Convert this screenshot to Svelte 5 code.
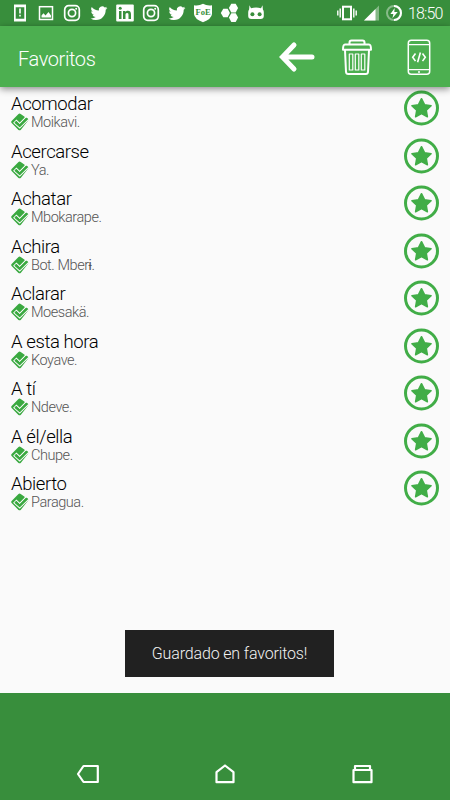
<script lang="ts">
  interface Favorite {
    word: string;
    translation: string;
  }

  const favorites: Favorite[] = [
    { word: 'Acomodar', translation: 'Moikavi.' },
    { word: 'Acercarse', translation: 'Ya.' },
    { word: 'Achatar', translation: 'Mbokarape.' },
    { word: 'Achira', translation: 'Bot. Mberɨ.' },
    { word: 'Aclarar', translation: 'Moesakä.' },
    { word: 'A esta hora', translation: 'Koyave.' },
    { word: 'A tí', translation: 'Ndeve.' },
    { word: 'A él/ella', translation: 'Chupe.' },
    { word: 'Abierto', translation: 'Paragua.' }
  ];

  const notifications = [
    'alert',
    'image',
    'instagram',
    'twitter',
    'linkedin',
    'instagram',
    'twitter',
    'shield',
    'hexagons',
    'robot'
  ];
</script>

<div class="screen">
  <header class="status-bar">
    <div class="notifications">
      {#each notifications as name, i (i)}
        <svg width="20" height="20" viewBox="0 0 20 20" fill="none" stroke="#fff">
          {#if name === 'alert'}
            <path d="M4 1.5h12v17H4zM5.7 4.2v11.6h8.6V4.2z" fill="#fff" fill-rule="evenodd" stroke="none" />
            <path d="M10 5.5v5M10 11.8v1.8" stroke-width="1.6" />
          {:else if name === 'image'}
            <rect x="3.5" y="3.7" width="13" height="12.8" stroke-width="1.5" />
            <path d="M5.5 14.5v-2l2-2.2 2 2.2 3-3.5 2.5 3.5v2z" fill="#fff" stroke="none" />
          {:else if name === 'instagram'}
            <rect x="2.7" y="2.7" width="14.6" height="14.6" rx="4" stroke-width="1.7" />
            <circle cx="10" cy="10" r="3.6" stroke-width="1.7" />
            <circle cx="14.2" cy="5.8" r="1" fill="#fff" stroke="none" />
          {:else if name === 'twitter'}
            <path
              transform="translate(1.6 1.8) scale(.7)"
              d="M23.95 4.57a10 10 0 0 1-2.82.77 4.96 4.96 0 0 0 2.16-2.72c-.95.55-2 .95-3.13 1.18a4.92 4.92 0 0 0-8.38 4.48C7.69 8.09 4.07 6.13 1.64 3.16a4.93 4.93 0 0 0 1.52 6.57 4.9 4.9 0 0 1-2.23-.61v.06a4.92 4.92 0 0 0 3.95 4.83 5 5 0 0 1-2.21.08 4.94 4.94 0 0 0 4.6 3.42A9.87 9.87 0 0 1 0 19.54a14 14 0 0 0 7.55 2.21c9.06 0 14-7.5 14-13.98 0-.21 0-.42-.02-.63a9.9 9.9 0 0 0 2.42-2.57z"
              fill="#fff"
              stroke="none"
            />
          {:else if name === 'linkedin'}
            <rect x="1.2" y="1.5" width="17.6" height="17" rx="1" fill="#fff" stroke="none" />
            <g fill="#388e3c" stroke="none">
              <circle cx="5.2" cy="5.3" r="1.5" />
              <path d="M4 8h2.5v8H4zM8 8h2.4v1.1c.6-.9 1.4-1.3 2.5-1.3 2.4 0 3.1 1.5 3.1 3.7V16h-2.5v-4c0-1.2-.2-2.1-1.4-2.1s-1.6.9-1.6 2V16H8z" />
            </g>
          {:else if name === 'shield'}
            <path d="M1 2.2Q6 3 10 .8q4 2.2 9 1.4V11q-.4 5-9 8.2Q1.4 16 1 11z" fill="#fff" stroke="none" />
            <text x="10" y="12" text-anchor="middle" class="shield-text">FoE</text>
          {:else if name === 'hexagons'}
            <g fill="#fff" stroke="none">
              <path d="M3.3 5.7h4.400l2.200 4.300-2.200 4.300H3.300L.8 10z" />
              <path d="M11.3.8h4.400l2.400 4.300-2.400 4.300h-4.400L8.900 5.100z" />
              <path d="M11.3 10.300h4.400l2.400 4.300-2.400 4.300h-4.400l-2.400-4.300z" />
            </g>
          {:else}
            <path d="M3.5 2.2 5 5.2Q10 3.900 15 5.200l1.5-3 .4 4.300q.9 1 .9 2.800v3.600q0 3-3.200 3H5.400q-3.200 0-3.200-3V9.300q0-1.800.9-2.800z" fill="#fff" stroke="none" />
            <circle cx="6.4" cy="11.2" r="2" fill="#388e3c" stroke="none" />
            <circle cx="13.6" cy="11.2" r="2" fill="#388e3c" stroke="none" />
          {/if}
        </svg>
      {/each}
    </div>
    <div class="system">
      <svg width="20" height="20" viewBox="0 0 20 20" fill="none" stroke="#fff" stroke-width="1.4">
        <rect x="6" y="3.7" width="8" height="12.6" stroke-width="2" />
        <path d="M3.2 5.5v9M.8 7.5v5M16.8 5.5v9M19.2 7.5v5" />
      </svg>
      <svg width="17" height="20" viewBox="0 0 17 20" class="signal">
        <path d="M1 17.5 16 2.5v15z" fill="#84b986" />
        <path d="M1 17.5 12.5 6v11.5z" fill="#fff" />
      </svg>
      <svg width="18" height="20" viewBox="0 0 18 20" fill="none" class="charge">
        <circle cx="9" cy="10" r="7" stroke="#88bb8a" stroke-width="2" />
        <path d="M9 3a7 7 0 0 1 0 14" stroke="#fff" stroke-width="2" />
        <path d="M9.7 5 5.4 11h3l-1 4.3L12.7 9H9.3z" fill="#fff" />
      </svg>
      <span class="clock">18:50</span>
    </div>
  </header>

  <div class="toolbar">
    <h1>Favoritos</h1>
    <div class="actions">
      <button aria-label="Volver">
        <svg width="38" height="38" viewBox="0 0 38 38" fill="none" stroke="#fff" stroke-width="5" stroke-linecap="round">
          <path d="M17 7 5.5 19 17 31M6 19h29" />
        </svg>
      </button>
      <button aria-label="Borrar">
        <svg width="32" height="38" viewBox="0 0 32 38" fill="none" stroke="#fff" stroke-width="2" stroke-linejoin="round">
          <path d="M8.5 6V4.5Q8.5 2.5 10.5 2.5h11q2 0 2 2V6" />
          <path d="M4 6.5h24q2 0 2 5.3H2Q2 6.5 4 6.5z" />
          <path d="m4 12 1 22q.2 2 2.200 2h17.600q2 0 2.200-2l1-22" />
          <g stroke-width="1.2">
            <rect x="8.3" y="16" width="3.5" height="16" />
            <rect x="14.3" y="16" width="3.5" height="16" />
            <rect x="20.3" y="16" width="3.5" height="16" />
          </g>
        </svg>
      </button>
      <button aria-label="Desarrollador">
        <svg width="24" height="38" viewBox="0 0 24 38" fill="none" stroke="#fff" stroke-width="1.5">
          <rect x="1.3" y="2.3" width="21.4" height="34" rx="3" />
          <path d="M1.5 6.7h21M1.5 31.7h21" stroke-width="1.2" />
          <path d="m8.5 15.5-2.800 3.800 2.800 3.800M15.500 15.500l2.800 3.800-2.800 3.800M13.400 14.500l-2.800 9.800" stroke-width="1.6" />
          <path d="M11 34h2" stroke-width="1.7" />
        </svg>
      </button>
    </div>
  </div>

  <main>
    {#each favorites as favorite (favorite.word)}
      <div class="row">
        <div class="entry">
          <div class="word">{favorite.word}</div>
          <div class="translation">
            <svg width="18" height="18" viewBox="0 0 18 18">
              <path d="M7.5.9Q8.600 0 9.700.9L16.800 6q.9 1 0 2l-7.100 8.900q-1.100.9-2.200 0L.6 10q-.8-1 0-2z" fill="#3aa940" />
              <path d="m13.3 4.200 2.600-2.400 2 2.200-1.500 1.500z" fill="#fafafa" />
              <path
                d="m14.800 4.200-6.100 6.300-3.300-3.300-2.500 2.500 5.800 5.300 8.600-8.500"
                fill="none"
                stroke="#fafafa"
                stroke-width="1.1"
              />
              <path d="m4.300 8.900 4.400 3.900 7.700-7.600" fill="none" stroke="#3aa940" stroke-width="2.2" />
            </svg>
            <span>{favorite.translation}</span>
          </div>
        </div>
        <svg class="star" width="36" height="36" viewBox="0 0 36 36">
          <circle cx="17.5" cy="18" r="16" fill="none" stroke="#41ad47" stroke-width="3" />
          <path
            d="m17.5 8.700 3 6 6.600 1-4.800 4.600 1.100 6.500-5.900-3.100-5.900 3.100 1.100-6.500-4.800-4.600 6.600-1z"
            fill="#41ad47"
            stroke="#41ad47"
            stroke-width="1.5"
            stroke-linejoin="round"
          />
        </svg>
      </div>
    {/each}
    <div class="toast">Guardado en favoritos!</div>
  </main>

  <nav>
    <svg width="24" height="24" viewBox="0 0 24 24">
      <path d="M7.5 4h14.300v16H7.500L2 12z" />
    </svg>
    <svg width="24" height="24" viewBox="0 0 24 24">
      <path d="M3.5 20.200v-10L12 3.500l8.500 6.700v10z" />
    </svg>
    <svg width="24" height="24" viewBox="0 0 24 24">
      <path d="M3.5 8h18v12.200h-18zM5 7.500V4h15v3.500" />
    </svg>
  </nav>
</div>

<style>
  :global(body) {
    margin: 0;
  }

  .screen {
    display: flex;
    flex-direction: column;
    width: 450px;
    height: 800px;
    overflow: hidden;
    background: #fafafa;
    font-family: Roboto, 'Open Sans', sans-serif;
    font-weight: 300;
  }

  svg {
    display: block;
    flex: none;
  }

  .status-bar {
    display: flex;
    flex: none;
    justify-content: space-between;
    box-sizing: border-box;
    height: 26px;
    padding: 3px 8px 3px 7px;
    background: #388e3c;
  }

  .notifications {
    display: grid;
    grid-template-columns: repeat(10, 26.2px);
    justify-items: center;
  }

  .shield-text {
    fill: #388e3c;
    stroke: none;
    font: bold 8.5px 'Liberation Serif', serif;
  }

  .system {
    display: flex;
    align-items: center;
    color: #fff;
  }

  .signal {
    margin-left: 6px;
  }

  .charge {
    margin-left: 5px;
  }

  .clock {
    width: 34px;
    margin: 2px 0 0 5px;
    font-size: 16px;
    letter-spacing: -0.9px;
    line-height: 18px;
    white-space: nowrap;
  }

  .toolbar {
    z-index: 1;
    display: flex;
    flex: none;
    align-items: center;
    justify-content: space-between;
    box-sizing: border-box;
    height: 61px;
    padding: 0 19px 0 18px;
    background: #4caf50;
    box-shadow: 0 2px 7px rgba(0, 0, 0, 0.45);
  }

  h1 {
    margin: 4px 0 0;
    color: #fff;
    font-size: 20px;
    font-weight: 300;
    letter-spacing: -0.4px;
  }

  .actions {
    display: flex;
    align-items: center;
  }

  button {
    padding: 0;
    border: 0;
    background: none;
  }

  button + button {
    margin-left: 26px;
  }

  button:last-child {
    margin-left: 34px;
  }

  main {
    position: relative;
    flex: 1;
    padding-top: 3px;
  }

  .row {
    display: flex;
    justify-content: space-between;
    height: 47.5px;
    padding: 0 10px 0 11px;
  }

  .word {
    box-sizing: border-box;
    height: 24px;
    padding-top: 5px;
    color: #000;
    font-size: 18.5px;
    letter-spacing: -0.4px;
    line-height: 19px;
    white-space: nowrap;
  }

  .translation {
    display: flex;
    align-items: center;
    gap: 2px;
    height: 16px;
    color: #555;
    font-size: 14.5px;
    letter-spacing: -0.45px;
    line-height: 16px;
  }

  .translation span {
    padding-top: 2px;
  }

  .toast {
    position: absolute;
    bottom: 16px;
    left: 125px;
    width: 209px;
    height: 47px;
    background: #212121;
    color: #f2f2f2;
    font-size: 16px;
    letter-spacing: -0.15px;
    line-height: 48px;
    text-align: center;
  }

  nav {
    display: flex;
    flex: none;
    align-items: flex-end;
    justify-content: space-between;
    box-sizing: border-box;
    height: 107px;
    padding: 0 76px 14px;
    background: #388e3c;
  }

  nav path {
    fill: none;
    stroke: #fff;
    stroke-width: 2.2;
    stroke-linejoin: round;
  }
</style>
